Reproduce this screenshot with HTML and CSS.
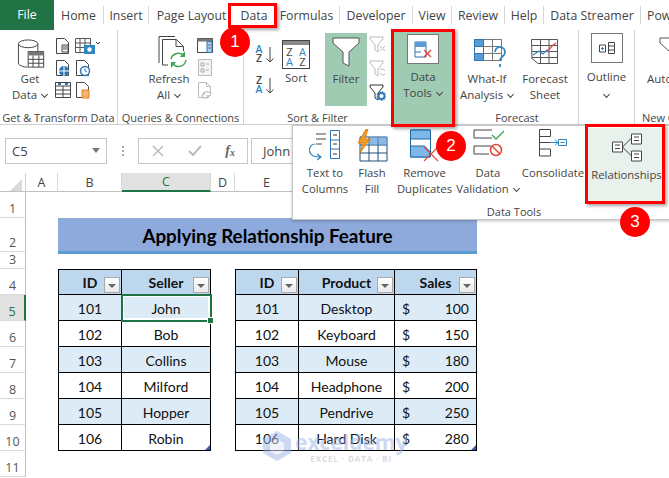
FILE: index.html
```html
<!DOCTYPE html>
<html lang="en">
<head>
<meta charset="utf-8">
<title>Applying Relationship Feature</title>
<link rel="stylesheet" href="styles.css">
</head>
<body>
<div class="app">
  <nav class="tabs">
    <div class="tab file">File</div>
    <div class="tab w-home">Home</div><i class="tsep"></i>
    <div class="tab w-insert">Insert</div><i class="tsep"></i>
    <div class="tab w-page">Page Layout</div>
    <div class="tab w-data">Data</div>
    <div class="tab w-form">Formulas</div><i class="tsep"></i>
    <div class="tab w-dev">Developer</div><i class="tsep"></i>
    <div class="tab w-view">View</div><i class="tsep"></i>
    <div class="tab w-rev">Review</div><i class="tsep"></i>
    <div class="tab w-help">Help</div><i class="tsep"></i>
    <div class="tab w-ds">Data Streamer</div><i class="tsep"></i>
    <div class="tab w-pow">Pow</div>
  </nav>

  <section class="ribbon">
    <div class="group g-get">
      <div class="gbody">
        <div class="big b-get">
          <svg class="ic-get" width="34" height="34" viewBox="0 0 34 34"><ellipse cx="12" cy="6" rx="10" ry="4" fill="#fff" stroke="#444"/><path d="M2 6V26c0 2 5 4 9 4M22 6v8" fill="#fff" stroke="#444"/><rect x="12" y="14" width="16" height="16" fill="#fff" stroke="#444"/><rect x="12" y="14" width="16" height="4" fill="#777"/><path d="M12 22h16M12 26h16M17 18v12M23 18v12" stroke="#444"/></svg>
          <div class="btxt">Get<br>Data <b class="chev"></b></div>
        </div>
        <div class="smallgrid">
          <svg width="16" height="18" viewBox="0 0 16 18"><path d="M1.500 1.500h8l4 4v11h-12z" fill="#fff" stroke="#444"/><path d="M7 8h6v7H7z" fill="#fff" stroke="#444"/><path d="M8 10h4M8 12h4" stroke="#444"/></svg>
          <svg width="26" height="17" viewBox="0 0 26 17"><path d="M.5.500h15v14H.5zM.5 5h15M5 .500v14M10 .500v14M.5 9.500h15" fill="#fff" stroke="#555"/><rect x="9" y="7" width="11" height="9" fill="#2e86c1"/><circle cx="14.500" cy="11.500" r="2.200" fill="#fff"/><path d="M21 4l2 2 2-2" fill="none" stroke="#444"/></svg>
          <svg width="16" height="18" viewBox="0 0 16 18"><path d="M1.500 1.500h8l4 4v11h-12z" fill="#fff" stroke="#444"/><circle cx="9" cy="12" r="5" fill="#2e75b6"/><path d="M4 12h10M9 7v10" stroke="#fff"/></svg>
          <svg width="16" height="18" viewBox="0 0 16 18"><path d="M1.500 1.500h8l4 4v11h-12z" fill="#fff" stroke="#444"/><circle cx="10" cy="12" r="4.500" fill="#fff" stroke="#2e75b6" stroke-width="1.500"/><path d="M10 9.500V12l2 1" fill="none" stroke="#2e75b6"/></svg>
          <svg width="16" height="16" viewBox="0 0 16 16"><path d="M.5.500h15v15H.5zM.5 8h15M.5 12h15M8 4v11" fill="#fff" stroke="#444"/><path d="M.5.500h15v3.500H.5z" fill="#fff" stroke="#444"/><path d="M3 2h3M10 2h3" stroke="#2e75b6" stroke-width="2"/></svg>
          <svg width="16" height="18" viewBox="0 0 16 18"><path d="M1.500 1.500h8l4 4v11h-12z" fill="#fff" stroke="#444"/><path d="M7 9h7v8H7z" fill="#f5b26b" stroke="#d9822b"/></svg>
        </div>
      </div>
      <div class="glabel">Get &amp; Transform Data</div>
    </div>

    <div class="group g-query">
      <div class="gbody">
        <div class="big b-refresh">
          <svg class="ic-ref" width="30" height="36" viewBox="0 0 30 36"><path d="M1 1.500h16M1 1.500V28M4.500 4.500h14l7 7V16M4.500 4.500V30H10" fill="none" stroke="#444"/><path d="M18 4.500v7h7" fill="none" stroke="#444"/><path d="M13 24a7.500 7.500 0 0 1 13-3M28 25a7.500 7.500 0 0 1-13 4" fill="none" stroke="#3aa655" stroke-width="1.500"/><path d="M27 16v6h-5zM13 33v-6h5z" fill="#3aa655"/></svg>
          <div class="btxt">Refresh<br>All <b class="chev"></b></div>
        </div>
        <div class="smallcol">
          <svg width="16" height="15" viewBox="0 0 16 15"><path d="M.5.500h15v14H.5z" fill="#fff" stroke="#444"/><path d="M.5.500h15v3H.5z" fill="#777"/><path d="M10 3.500h5v11h-5z" fill="#5b9bd5" fill-opacity=".5" stroke="#2e75b6"/><path d="M11.500 7h2M11.500 10h2" stroke="#1f4e79"/></svg>
          <svg width="14" height="17" viewBox="0 0 14 17"><path d="M.5.500h13v16H.5z" fill="#f4f4f4" stroke="#bbb"/><path d="M3 4h3v3H3zM3 10h3v3H3zM8 5h3M8 11h3" fill="none" stroke="#aaa"/></svg>
          <svg width="16" height="17" viewBox="0 0 16 17"><path d="M1.500.500h8l4 4v6M1.500.500v15h5M9.500.500v4h4" fill="none" stroke="#bbb"/><path d="M6 12a3 2 0 0 1 3-2h2a3 2 0 0 1 0 4H9M12 14a3 2 0 0 1-3 2H8a3 2 0 0 1 0-4" fill="none" stroke="#aaa"/></svg>
        </div>
      </div>
      <div class="glabel">Queries &amp; Connections</div>
    </div>

    <div class="group g-sort">
      <div class="gbody">
        <div class="azcol">
          <div class="az"><div class="azt"><span class="blue">A</span><span>Z</span></div><svg width="8" height="16" viewBox="0 0 8 16"><path d="M4 0v15M.5 11.500L4 15l3.500-3.500" fill="none" stroke="#444"/></svg></div>
          <div class="az"><div class="azt"><span>Z</span><span class="blue">A</span></div><svg width="8" height="16" viewBox="0 0 8 16"><path d="M4 0v15M.5 11.500L4 15l3.500-3.500" fill="none" stroke="#444"/></svg></div>
        </div>
        <div class="big b-sort">
          <div class="sorticon"><div class="sorthead"></div><div class="sortbody"><div class="azt"><span>Z</span><span class="blue">A</span></div><div class="azt"><span class="blue">A</span><span>Z</span></div></div></div>
          <div class="btxt">Sort</div>
        </div>
        <div class="big b-filter">
          <svg width="28" height="30" viewBox="0 0 28 30"><path d="M1 1h26v5L17 15v14l-6-3V15L1 6z" fill="#fff" stroke="#555"/></svg>
          <div class="btxt">Filter</div>
        </div>
        <div class="smallcol filtcol">
          <svg width="17" height="17" viewBox="0 0 17 17"><path d="M1 1h13v2L9 9v7l-3-2V9L1 3z" fill="#fff" stroke="#bbb"/><path d="M11 10l5 5m0-5l-5 5" stroke="#bbb"/></svg>
          <svg width="17" height="17" viewBox="0 0 17 17"><path d="M1 1h13v2L9 9v7l-3-2V9L1 3z" fill="#fff" stroke="#bbb"/><path d="M11 10a3 3 0 0 1 5 1M16 14a3 3 0 0 1-5-1" fill="none" stroke="#bbb"/></svg>
          <svg width="17" height="17" viewBox="0 0 17 17"><path d="M1 1h13v2L9 9v7l-3-2V9L1 3z" fill="#fff" stroke="#333"/><circle cx="12.500" cy="12" r="3" fill="none" stroke="#2e75b6" stroke-width="1.800"/><circle cx="12.500" cy="12" r="4.500" fill="none" stroke="#2e75b6" stroke-dasharray="1.500 1.500"/></svg>
        </div>
      </div>
      <div class="glabel">Sort &amp; Filter</div>
    </div>

    <div class="group g-tools">
      <div class="toolbox">
        <svg width="18" height="17" viewBox="0 0 18 17"><path d="M1 1h11v15H1z" fill="#fff" stroke="#2e75b6"/><path d="M1 1h11v5H1z" fill="#5b9bd5"/><path d="M1 11h6" stroke="#2e75b6"/><path d="M10 9l7 7m0-7l-7 7" stroke="#e5443a" stroke-width="1.300"/></svg>
      </div>
      <div class="btxt">Data<br>Tools <b class="chev"></b></div>
    </div>

    <div class="group g-fore">
      <div class="gbody">
        <div class="big b-what">
          <svg class="ic-what" width="34" height="30" viewBox="0 0 34 30"><path d="M.5.500h27v21H.5zM.5 7.500h27M.5 14.500h27M9.500.500v21M18.500.500v21" fill="#fff" stroke="#777"/><path d="M.5.500h9v7h-9zM.5 14.500h9v7h-9z" fill="#5b9bd5" stroke="#2e75b6"/><path d="M.5 7.500h9v7h-9z" fill="#fff" stroke="#2e75b6"/><path d="M21 13a5 5 0 1 1 8 4c-2 2-3 2-3 5M26 25v3" fill="none" stroke="#2e86c1" stroke-width="1.800"/></svg>
          <div class="btxt">What-If<br>Analysis <b class="chev"></b></div>
        </div>
        <div class="big b-cast">
          <svg width="29" height="25" viewBox="0 0 29 25"><path d="M.5.500h26v24H7l-6-5zM.5 6.500h26M.5 12.500h26M.5 18.500h26M9.500.500v24M18 .500v24" fill="#fff" stroke="#555"/><path d="M2 16l6-4 4 3 4-4 3 2" fill="none" stroke="#2e86c1" stroke-width="1.300"/><path d="M16 13l5-6 4-3" fill="none" stroke="#e5443a" stroke-width="1.300"/></svg>
          <div class="btxt">Forecast<br>Sheet</div>
        </div>
      </div>
      <div class="glabel">Forecast</div>
    </div>

    <div class="group g-out">
      <div class="toolbox outbox">
        <svg width="16" height="12" viewBox="0 0 16 12"><path d="M9.500.500h6v11h-6zM9.500 4h6M9.500 8h6M.5 3h6v7h-6z" fill="#fff" stroke="#444"/><path d="M2 6.500h3M3.500 5v3" stroke="#2e75b6"/></svg>
      </div>
      <div class="btxt">Outline<br><b class="chev solo"></b></div>
    </div>

    <div class="group g-new">
      <div class="gbody newbody">
        <svg class="ic-new" width="28" height="30" viewBox="0 0 28 30"><path d="M1 1h26v5L17 15v14l-6-3V15L1 6z" fill="#fff" stroke="#555"/></svg>
        <div class="btxt">Auto</div>
      </div>
      <div class="newlabel">New C</div>
    </div>
  </section>

  <section class="fbar">
    <div class="namebox"><span>C5</span><i class="tri"></i></div>
    <div class="vdots"></div>
    <div class="fxbox">
      <svg width="12" height="12" viewBox="0 0 12 12"><path d="M1 1l10 10M11 1L1 11" stroke="#bbb" stroke-width="1.500"/></svg>
      <svg width="14" height="12" viewBox="0 0 14 12"><path d="M1 6l4 4 8-9" fill="none" stroke="#bbb" stroke-width="2"/></svg>
      <span class="fx">f<sub>x</sub></span>
    </div>
    <div class="fval">John</div>
  </section>

  <section class="sheet">
    <div class="row colheads">
      <div class="corner"><i></i></div>
      <div class="ch ca">A</div><div class="ch cb">B</div><div class="ch cc cur">C</div><div class="ch cd">D</div><div class="ch ce">E</div><div class="ch cf">F</div><div class="ch cg">G</div>
    </div>
    <div class="row r1"><div class="rh">1</div></div>
    <div class="row r2"><div class="rh">2</div><div class="ca"></div><div class="band">Applying Relationship Feature</div></div>
    <div class="row r3"><div class="rh">3</div></div>
    <div class="row r4"><div class="rh">4</div><div class="ca"></div>
      <div class="td cb th lft top">ID<i class="fbtn"></i></div><div class="td cc th top">Seller<i class="fbtn"></i></div><div class="cd"></div>
      <div class="td ce th lft top">ID<i class="fbtn"></i></div><div class="td cf th top">Product<i class="fbtn"></i></div><div class="td cg th top">Sales<i class="fbtn"></i></div>
    </div>
    <div class="row rd"><div class="rh rcur">5</div><div class="ca"></div>
      <div class="td cb odd lft">101</div><div class="td cc odd sel">John<i class="handle"></i></div><div class="cd"></div>
      <div class="td ce odd lft">101</div><div class="td cf odd">Desktop</div><div class="td cg odd money"><span>$</span><span>100</span></div>
    </div>
    <div class="row rd"><div class="rh">6</div><div class="ca"></div>
      <div class="td cb lft">102</div><div class="td cc">Bob</div><div class="cd"></div>
      <div class="td ce lft">102</div><div class="td cf">Keyboard</div><div class="td cg money"><span>$</span><span>150</span></div>
    </div>
    <div class="row rd"><div class="rh">7</div><div class="ca"></div>
      <div class="td cb odd lft">103</div><div class="td cc odd">Collins</div><div class="cd"></div>
      <div class="td ce odd lft">103</div><div class="td cf odd">Mouse</div><div class="td cg odd money"><span>$</span><span>180</span></div>
    </div>
    <div class="row rd"><div class="rh">8</div><div class="ca"></div>
      <div class="td cb lft">104</div><div class="td cc">Milford</div><div class="cd"></div>
      <div class="td ce lft">104</div><div class="td cf">Headphone</div><div class="td cg money"><span>$</span><span>200</span></div>
    </div>
    <div class="row rd"><div class="rh">9</div><div class="ca"></div>
      <div class="td cb odd lft">105</div><div class="td cc odd">Hopper</div><div class="cd"></div>
      <div class="td ce odd lft">105</div><div class="td cf odd">Pendrive</div><div class="td cg odd money"><span>$</span><span>250</span></div>
    </div>
    <div class="row rd"><div class="rh">10</div><div class="ca"></div>
      <div class="td cb lft">106</div><div class="td cc">Robin<i class="corner-mark"></i></div><div class="cd"></div>
      <div class="td ce lft">106</div><div class="td cf">Hard Disk</div><div class="td cg money"><span>$</span><span>280</span><i class="corner-mark"></i></div>
    </div>
    <div class="row rd"><div class="rh">11</div></div>
  </section>

  <!-- overlays -->
  <aside class="popup">
    <div class="pbody">
      <div class="pbtn p-text">
        <svg width="32" height="33" viewBox="0 0 32 33"><path d="M7 5h10M7 10h10M7 15h6" stroke="#444"/><path d="M21.500 1.500h9v28h-9zM21.500 11h9M21.500 20h9" fill="#fff" stroke="#2e75b6"/><path d="M24 6h4M24 15h4M24 25h4" stroke="#333"/><path d="M6 15a6 6 0 0 0-4 10c2 3 6 3 9 3M8 25l4 3-4 3" fill="none" stroke="#2e86c1" stroke-width="1.200"/></svg>
        <div class="btxt">Text to<br>Columns</div>
      </div>
      <div class="pbtn p-flash">
        <svg width="31" height="33" viewBox="0 0 31 33"><path d="M3 8h27v24H3zM3 16h27M3 24h27M12 8v24M21 8v24" fill="#fff" stroke="#1f4e79"/><path d="M12 8h18v8H12z" fill="#5b9bd5" fill-opacity=".7"/><path d="M9 0L1 14h5L3 24l10-14H8l3-10z" fill="#f59a23" stroke="#c96f00" stroke-width=".7"/></svg>
        <div class="btxt">Flash<br>Fill</div>
      </div>
      <div class="pbtn p-rem">
        <svg width="30" height="33" viewBox="0 0 30 33"><path d="M.5 1h20v27H.5z" fill="#fff" stroke="#1f6aa5"/><path d="M.5 1h20v9H.5zM.5 17h14l5 5v6H.5z" fill="#7db8e8" stroke="#1f6aa5"/><path d="M14 18l14 14m0-14L14 32" stroke="#e5443a" stroke-width="1.100"/></svg>
        <div class="btxt">Remove<br>Duplicates</div>
      </div>
      <div class="pbtn p-val">
        <svg width="31" height="30" viewBox="0 0 31 30"><path d="M1 1h18M1 1v8h18M1 17h17M1 17v8h15" fill="none" stroke="#444"/><path d="M19 6l4 4 8-8" fill="none" stroke="#3aa655" stroke-width="1.300"/><circle cx="23" cy="21" r="5.500" fill="#fff" stroke="#e5443a" stroke-width="1.500"/><path d="M19 17l8 8" stroke="#e5443a" stroke-width="1.500"/></svg>
        <div class="btxt">Data<br>Validation <b class="chev"></b></div>
      </div>
      <div class="pbtn p-con">
        <svg width="28" height="28" viewBox="0 0 28 28"><path d="M.5.500h11v7H.5zM.5 20h11v7H.5zM.5 7.500V20" fill="#fff" stroke="#444"/><path d="M.5 13.500H15" stroke="#444"/><path d="M11 13.500h8M16 10.500l3 3-3 3" fill="none" stroke="#2e86c1"/><path d="M19.500 10.500h8v6h-8z" fill="#fff" stroke="#2e86c1"/><path d="M21.500 13.500h4" stroke="#2e86c1"/></svg>
        <div class="btxt">Consolidate</div>
      </div>
      <div class="pbtn p-rel">
        <svg width="30" height="29" viewBox="0 0 30 29"><path d="M19.500 1h10v10h-10zM19.500 18h10v10h-10zM.5 9h10v10H.5z" fill="#fff" stroke="#444"/><path d="M10.500 14l9-9M10.500 14l9 9" stroke="#444"/><path d="M22 4h5M22 7.500h5M22 21h5M22 24.500h5M3 12h5M3 15.500h5" stroke="#444"/></svg>
        <div class="btxt">Relationships</div>
      </div>
    </div>
    <div class="glabel plabel">Data Tools</div>
  </aside>

  <div class="mark m-data"></div>
  <div class="mark m-tools"></div>
  <div class="mark m-rel"></div>
  <div class="dot d1">1</div>
  <div class="dot d2">2</div>
  <div class="dot d3">3</div>

  <div class="water">
    <svg width="30" height="32" viewBox="0 0 30 32"><path d="M15 1l14 8v14l-14 8-14-8V9z" fill="#9db4e8"/><path d="M15 9l7 4v8l-7 4-7-4v-8z" fill="#e3e9f8"/></svg>
    <div class="wtxt"><div class="w1">exceldemy</div><div class="w2">EXCEL · DATA · BI</div></div>
  </div>
</div>
</body>
</html>
```
FILE: styles.css
```css
* { box-sizing: border-box; }
html, body { margin: 0; padding: 0; }
body { width: 669px; height: 478px; overflow: hidden; background: #fff; font-family: "Open Sans", "Noto Sans", sans-serif; color: #333; }
.app { position: relative; width: 669px; height: 478px; overflow: hidden; background: #fff; }

/* tabs */
.tabs { display: flex; align-items: center; height: 30px; font-size: 12.300px; color: #444; white-space: nowrap; }
.tab { text-align: center; flex: none; }
.tsep { flex: none; width: 1px; height: 18px; background: #d6d6d6; }
.file { width: 54px; height: 30px; line-height: 30px; background: #217346; color: #fff; }
.w-home { width: 49px; }
.w-insert { width: 44px; }
.w-page { width: 85px; }
.w-data { width: 40px; }
.w-form { width: 65px; }
.w-dev { width: 72px; }
.w-view { width: 38px; }
.w-rev { width: 52px; }
.w-help { width: 38px; }
.w-ds { width: 96px; }
.w-pow { width: 26px; padding-left: 6px; text-align: left; }

/* ribbon */
.ribbon { display: flex; height: 95px; border-bottom: 1px solid #d0d0d0; background: #fff; }
.group { flex: none; display: flex; flex-direction: column; border-right: 1px solid #d4d4d4; height: 94px; padding-top: 3px; }
.gbody { display: flex; height: 77px; flex: none; }
.glabel { font-size: 11px; line-height: 16px; text-align: center; white-space: nowrap; color: #444; }
.btxt { font-size: 11.500px; line-height: 16px; text-align: center; color: #444; white-space: nowrap; }
.chev { display: inline-block; width: 5px; height: 5px; margin: 0 1px 2px 2px; border-right: 1px solid #444; border-bottom: 1px solid #444; transform: rotate(45deg); }
.big { display: flex; flex-direction: column; align-items: center; justify-content: space-between; flex: none; height: 70px; padding-top: 2px; }

.g-get { width: 118px; }
.b-get { width: 44px; margin-left: 8px; }
.ic-get { margin: 3px 0 0 6px; }
.smallgrid { display: grid; grid-template-columns: 20px 26px; grid-auto-rows: 22px; margin: 2px 0 0 3px; align-items: center; }

.g-query { width: 126px; }
.b-refresh { width: 48px; margin-left: 27px; }
.ic-ref { margin-left: 8px; }
.smallcol { display: flex; flex-direction: column; align-items: center; gap: 6px; margin: 5px 0 0 3px; width: 18px; }

.g-sort { width: 148px; }
.azcol { display: flex; flex-direction: column; gap: 13px; margin: 12px 0 0 9px; width: 26px; }
.az { display: flex; align-items: flex-end; gap: 1px; }
.azt { display: flex; flex-direction: column; font-size: 10.500px; line-height: 9px; font-weight: 600; width: 12px; text-align: center; color: #444; }
.blue { color: #2e86c1; }
.b-sort { width: 32px; margin-left: 1px; justify-content: flex-start; }
.sorticon { width: 28px; height: 29px; border: 1px solid #444; margin-top: 5px; margin-bottom: 1px; }
.sorthead { height: 4px; background: #888; }
.sortbody { display: flex; padding-top: 2px; }
.sortbody .azt { width: 13px; font-size: 11px; line-height: 10px; font-weight: 400; }
.b-filter { width: 42px; margin: 0 0 0 13px; height: 73px; background: #a0cbb3; justify-content: flex-start; gap: 4px; padding-top: 4px; }
.filtcol { gap: 7px; margin: 3px 0 0 1px; }

.g-tools { width: 64px; align-items: center; background: #a0cbb3; padding-top: 4px; border-right: 0; margin-left: -1px; }
.toolbox { width: 32px; height: 30px; flex: none; background: #fff; border: 1px solid #777; display: flex; align-items: center; justify-content: center; margin-bottom: 5px; }

.g-fore { width: 123px; margin-left: 1px; }
.g-fore .gbody { padding-top: 4px; }
.b-what { width: 56px; margin-left: 3px; height: 66px; }
.ic-what { margin-left: 8px; }
.b-cast { width: 50px; margin-left: 5px; height: 66px; }

.g-out { width: 56px; align-items: center; }
.outbox { margin-bottom: 6px; }
.solo { margin: 0; }

.g-new { width: 36px; border: 0; overflow: hidden; }
.newbody { flex-direction: column; padding: 4px 0 0 24px; gap: 4px; }
.ic-new { flex: none; }
.newbody .btxt { text-align: left; margin-left: -12px; }
.newlabel { font-size: 11px; line-height: 16px; padding-left: 7px; color: #444; white-space: nowrap; }

/* formula bar */
.fbar { display: flex; align-items: center; height: 48px; padding: 3px 0 0 5px; font-size: 13px; color: #444; }
.namebox { display: flex; align-items: center; justify-content: space-between; width: 102px; height: 26px; border: 1px solid #c6c6c6; padding: 0 6px; }
.tri { width: 0; height: 0; border: 4px solid transparent; border-top: 5px solid #777; border-bottom: 0; }
.vdots { width: 2px; height: 10px; margin: 0 14px 0 15px; background: repeating-linear-gradient(#aaa 0 2px, transparent 2px 4px); }
.fxbox { display: flex; align-items: center; justify-content: space-between; width: 110px; height: 26px; border: 1px solid #c6c6c6; padding: 0 12px 0 13px; }
.fx { font: italic 600 14px "Liberation Serif", serif; color: #666; }
.fx sub { font-size: 10px; vertical-align: -1px; }
.fval { flex: 1; height: 26px; margin-left: 3px; border: 1px solid #c6c6c6; padding-left: 11px; line-height: 24px; }

/* sheet */
.sheet { font-family: Lato, "Open Sans", sans-serif; font-size: 14px; color: #111; }
.row { display: flex; }
.colheads { height: 19px; }
.corner { width: 26px; flex: none; border-right: 1px solid #d0d0d0; border-bottom: 1px solid #c0c0c0; }
.corner i { display: block; width: 0; height: 0; margin: 6px 0 0 10px; border-left: 12px solid transparent; border-bottom: 12px solid #dadada; }
.ch { display: flex; align-items: center; justify-content: center; flex: none; font: 12.500px "Open Sans", sans-serif; color: #444; border-right: 1px solid #d9d9d9; border-bottom: 1px solid #c0c0c0; }
.cur { background: #e1e1e1; border-bottom: 2px solid #217346; color: #217346; }
.ca { width: 32px; flex: none; }
.cb { width: 64px; flex: none; }
.cc { width: 89px; flex: none; }
.cd { width: 24px; flex: none; }
.ce { width: 64px; flex: none; }
.cf { width: 96px; flex: none; }
.cg { width: 82px; flex: none; }
.rh { width: 26px; flex: none; display: flex; align-items: flex-end; justify-content: center; font: 12.500px/17px "Open Sans", sans-serif; color: #555; border-right: 1px solid #c0c0c0; border-bottom: 1px solid #d9d9d9; }
.rcur { background: #e1e1e1; border-right: 2px solid #217346; color: #217346; }
.r1 { height: 26px; }
.r2 { height: 34px; }
.r3 { height: 17px; }
.r4 { height: 26px; }
.rd { height: 26px; }
.band { width: 419px; height: 36px; flex: none; position: relative; z-index: 1; background: #8ea9db; border-bottom: 3px solid #5b9bd5; font-size: 18.800px; font-weight: 700; color: #000; text-align: center; line-height: 35px; }
.td { position: relative; display: flex; align-items: center; justify-content: center; padding-top: 1px; border-right: 1px solid #000; border-bottom: 1px solid #000; }
.lft { border-left: 1px solid #000; }
.th { background: #bdd7ee; font-weight: 700; }
.top { border-top: 1px solid #000; }
.odd { background: #ddebf7; }
.money { justify-content: space-between; padding: 1px 7px 0; }
.fbtn { position: absolute; right: 1px; bottom: 1px; width: 16px; height: 16px; border: 1px solid #aaa; background: linear-gradient(#fff, #e9e9e9); }
.fbtn::after { content: ""; position: absolute; left: 3px; top: 6px; width: 0; height: 0; border: 4px solid transparent; border-top: 4px solid #666; border-bottom: 0; }
.sel { outline: 2px solid #217346; outline-offset: -1px; box-shadow: inset 0 0 0 2px #fff; z-index: 1; }
.handle { position: absolute; right: -4px; bottom: -4px; width: 7px; height: 7px; background: #217346; border: 1px solid #fff; }
.corner-mark { position: absolute; right: 0; bottom: 0; width: 0; height: 0; border-left: 5px solid transparent; border-bottom: 5px solid #2f5fae; }

/* popup */
.popup { position: absolute; z-index: 3; left: 292px; top: 125px; width: 390px; height: 95px; background: #fff; border: 1px solid #c8c8c8; box-shadow: 0 1px 3px rgba(0,0,0,.25); padding: 3px 0 0 6px; }
.popup .btxt { font-size: 11.300px; }
.pbody { display: flex; height: 75px; }
.pbtn { flex: none; display: flex; flex-direction: column; align-items: center; justify-content: space-between; height: 68px; }
.p-text { width: 52px; }
.p-flash { width: 42px; }
.p-rem { width: 63px; }
.p-val { width: 64px; }
.p-con { width: 66px; }
.p-con .btxt { padding-bottom: 16px; }
.p-rel { width: 77px; margin-left: 2px; height: 75px; margin-top: -1px; background: #e8f1ec; padding-top: 5px; justify-content: flex-start; gap: 5px; }
.plabel { width: 430px; }

/* red marks */
.mark { position: absolute; z-index: 4; border: 3px solid #f00; box-shadow: 2px 2px 3px rgba(0,0,0,.35); }
.m-data { left: 228px; top: 3px; width: 49px; height: 25px; }
.m-tools { left: 391px; top: 29px; width: 64px; height: 98px; }
.m-rel { left: 585px; top: 124px; width: 80px; height: 80px; }
.dot { position: absolute; z-index: 5; width: 30px; height: 30px; border-radius: 50%; background: #f00; color: #fff; font: 17px/30px "Liberation Sans", sans-serif; text-align: center; }
.d1 { left: 220px; top: 27px; }
.d2 { left: 436px; top: 131px; }
.d3 { left: 620px; top: 207px; }

/* watermark */
.water { position: absolute; z-index: 6; left: 262px; top: 430px; display: flex; align-items: flex-start; gap: 3px; opacity: .5; }
.wtxt { margin-top: 0; }
.w1 { font: 700 21px/24px "Open Sans", sans-serif; color: #9db4e8; }
.w2 { font: 700 8px/10px "Open Sans", sans-serif; color: #bbb; letter-spacing: .9px; text-align: center; }
```
